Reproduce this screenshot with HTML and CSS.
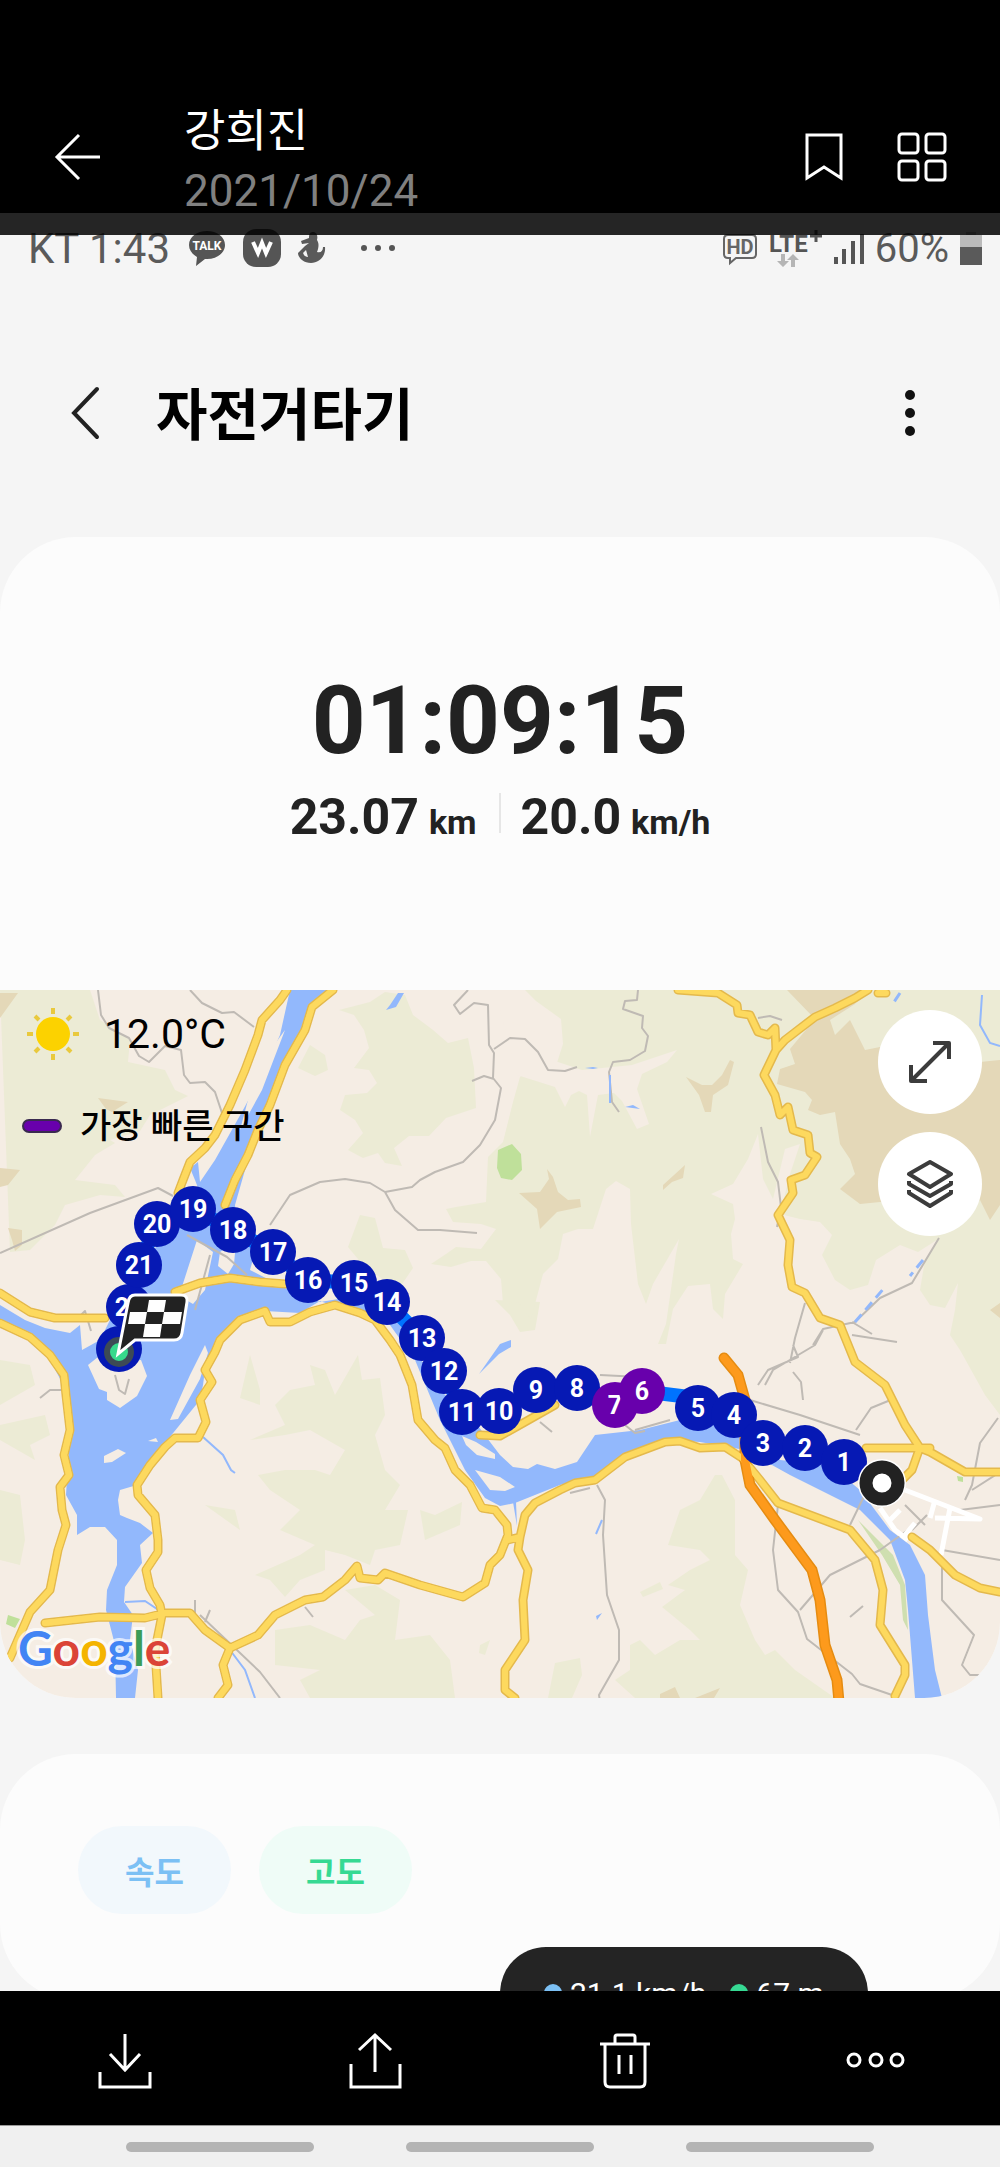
FILE: index.html
```html
<!DOCTYPE html>
<html lang="ko">
<head>
    <meta charset="UTF-8">
    <meta name="viewport" content="width=device-width, initial-scale=1.0">
    <title>자전거타기</title>
    <link rel="stylesheet" href="styles.css">
</head>
<body>
    <header class="viewer-header">
        <button class="icon-button" aria-label="뒤로">
            <svg width="48" height="48" viewBox="0 0 48 48"><path d="M25 2 3 24l22 22M3 24h43"/></svg>
        </button>
        <div class="viewer-title">
            <div class="name">강희진</div>
            <div class="date">2021/10/24</div>
        </div>
        <button class="icon-button" aria-label="북마크">
            <svg width="48" height="52" viewBox="0 0 48 52"><path d="M7 4h34v43L24 36 7 47z"/></svg>
        </button>
        <button class="icon-button" aria-label="모아보기">
            <svg width="52" height="52" viewBox="0 0 52 52">
                <rect x="3" y="3" width="19" height="19" rx="3"/><rect x="30" y="3" width="19" height="19" rx="3"/>
                <rect x="3" y="30" width="19" height="19" rx="3"/><rect x="30" y="30" width="19" height="19" rx="3"/>
            </svg>
        </button>
    </header>

    <main class="photo">
        <div class="status-bar">
            <span class="carrier">KT 1:43</span>
            <div class="status-icons">
                <svg width="38" height="40" viewBox="0 0 38 40">
                    <path d="M19 3c10 0 18 6 18 14s-8 14-18 14h-2l-9 7 1-9C4 26 1 22 1 17 1 9 9 3 19 3z" fill="#555"/>
                    <text x="19" y="22" class="talk">TALK</text>
                </svg>
                <svg width="40" height="40" viewBox="0 0 40 40">
                    <rect x="1" y="1" width="38" height="38" rx="13" fill="#555"/>
                    <path d="m11 14 5 11 4-10 4 10 5-11" fill="none" stroke="#fff" stroke-width="4"/>
                </svg>
                <svg width="28" height="40" viewBox="0 0 28 40">
                    <path d="M15 4c4 0 5 4 4 8 2 3 2 7 0 12 4 1 6-1 6-5h2c1 9-6 16-14 16C6 35 0 30 0 25l7-7 4-3-7 1-1-3 8-3c0-4 1-6 4-6z" fill="#5a5a5a"/>
                    <path d="m5 25 3-3 2 7c-2 0-4-1-5-4z" fill="#f5f5f5"/>
                </svg>
                <svg class="status-dots" width="36" height="8" viewBox="0 0 36 8" fill="#555">
                    <circle cx="4" cy="4" r="3"/><circle cx="18" cy="4" r="3"/><circle cx="32" cy="4" r="3"/>
                </svg>
            </div>
            <div class="status-right">
                <svg width="36" height="36" viewBox="0 0 36 36">
                    <path d="M6 5h24q4 0 4 4v15q0 4-4 4H14l-6 5v-5H6q-4 0-4-4V9q0-4 4-4z" fill="none" stroke="#666" stroke-width="2"/>
                    <text x="18" y="24" class="hd">HD</text>
                </svg>
                <svg width="54" height="40" viewBox="0 0 54 40">
                    <text x="0" y="24" class="lte">LTE</text>
                    <path d="M41 8h12M47 2v12" stroke="#555" stroke-width="3"/>
                    <path d="M12 26h4v7h4l-6 6-6-6h4zm10 13v-7h-4l6-6 6 6h-4v7z" fill="#b5b5b5"/>
                </svg>
                <svg width="30" height="36" viewBox="0 0 30 36">
                    <path d="M2 27v7M10 19v15M19 11v23M28 4v30" stroke="#555" stroke-width="4"/>
                </svg>
                <span>60%</span>
                <svg width="22" height="36" viewBox="0 0 22 36">
                    <path d="M6 2h10v3h6v12H0V5h6z" fill="#bbb"/><path d="M0 17h22v18H0z" fill="#5a5a5a"/>
                </svg>
            </div>
        </div>

        <div class="app-bar">
            <button aria-label="이전">
                <svg width="30" height="56" viewBox="0 0 30 56"><path d="M27 4 4 28l23 24" fill="none" stroke="#222" stroke-width="4" stroke-linecap="round"/></svg>
            </button>
            <h1>자전거타기</h1>
            <button aria-label="더보기">
                <svg width="12" height="48" viewBox="0 0 12 48" fill="#111"><circle cx="6" cy="6" r="5"/><circle cx="6" cy="24" r="5"/><circle cx="6" cy="42" r="5"/></svg>
            </button>
        </div>

        <section class="summary">
            <div class="summary-text">
                <div class="time">01:09:15</div>
                <div class="stats">
                    <div>23.07<small>km</small></div>
                    <div class="speed">20.0<small>km/h</small></div>
                </div>
            </div>

            <div class="map">
                <svg class="map-canvas" viewBox="0 0 1000 708">
                    <rect width="1000" height="708" fill="#f5ede4"/>
                    <!-- forest -->
                    <g fill="#ecebd5">
                        <path d="M0 0h90l10 30 30 20-2 22 37 8 10 20 13 6-38 19-10 16-30 9 5 3-20 12-20 25 40 5 10 12-25-2-35 10-10 20-25 25-20 2z"/>
                        <path d="m370 12 15-10 20 3 8 20 20 15 15 13 20-5 6 30 2 40-30 10-17 18h-20l-15 12 8 18-17-3-7-10-15 5-15-8 15-17-8-13-15-10 5-15 22-2 10-10-8-13-15-2 15-20-5-18-10-15-15-5zM310 55l15 10 3 15-13 6-17-8zM360 225l15 3 8 30 22 2 8 18-15 22-35-25-15-18zM495 310l45 2-5 28-15 2-10-17z"/>
                        <path d="M497 0h503v425l-15-20-25-45-10-15 5-25 3-27-13 25-15-3-10-15 5-30 15-22-22 14-18-7-24 15-8 25-18 5-15-10-13-25 10-20-12-13-20-3-20-5 10-40 10-30-15 5-12 50-10-20-5-45-10 25-15 25-22 10 22 10 2 15-4 15 2 25 10 5-18 30-2 25-10-10-3-25-22 2-15 23-7 35h-8l8-20 10-70 3-15-26 45-7 20-8-20-7-60-1-35-14-8-10 8-13 40h-15l-15 5-5 25-15 15-12 45-13-17-15 2-2-25-15-18h-15l-20 6-20-3 15-10 10-7 25 2 15-20-15-5-28-2-7-13 10-2 30-5 2-45 15-15 10-40 7-25 20-20 15 12 8-25-2-25-25-18-14-14z"/>
                        <path d="m250 450 35-15-10-20 15-15 25-5-5-20 15 5 10 25 23-40 4 25 18-2 5 37-10 20 10 35 15 15-15 25h23l-8 35-25 5-5 15-25-10-20-5v20l-25 10-15 17-15-17-15-5 45-20 15-10-35-15 20-20-30-20-12-15 27-5h30l15 5 15-25-35-20-25 5z"/>
                        <path d="m275 640 35-5 35 15 15-20 15-5-30-25 30-5 25 15-5 40 35-5 20 25 5 38H310l-10-18 20-10-45-5zM0 370l30 5 5 20-35 20zM0 435l45-10 5 20-20 10 5 15-35-20zM0 500l20 5 5 45-5 25-20-5zM240 408l10-43 10 35v15zM205 515l30 5 5 20zM420 520l15 5 27-13-2 23-35 15zM480 655l10-5-5 15-6-2z"/>
                        <path d="M715 485h7l13 25v55l13 15-8 35 15 35 10 15 10-5 20 20 40 28H635l-20-18 15-10v-25l10-5 15 15 25-15h20l-10-10-28-23 23-17-17-5 22-15 20-10-10-10-32-5 12-35 20-10zM548 708l7-35 25-5 2 17-10 23zM640 602l20-10 3 7-20 8z"/>
                    </g>
                    <path fill="#f5ede4" d="m500 20 12 12 28 12v22l42 14 50-5 45-15-10 12-25 12-5 15 12 35-12 5-15-28-8-8-16 2-8 42-3-42-8-4-8 4-6 12-10-20-38-12z"/>
                    <!-- high ground -->
                    <g fill="#e4d8b8">
                        <path d="M787 0h78l-10 14-25 16 5 15 15-15 15 30 25-5 60 20 50-5v145l-10 15-10-20-10 10-90-8-20 2-20-15 15-15-5-15-10-15-5-32-15 3-12-5 4-10-7-8-28-8 3-15 15-5-5-15 25-30z"/>
                        <path d="m686 87 16 8h10l10-10 8-15 4 2-6 23-15 10-2 17h-6l-6-17zM519 203l21-1 9-13-2-10 6 8 5 15 10 8 12-1 1 8-24 5-17 17-3-20zM663 195l22-20-2 13-11 4-9 8zM98 108l30 4-16 10-6-3zM0 178l20 2-12 15-8 2zM8 238l14 2v15l-7 6-3-11zM0 3h18L0 28zM660 704l15-7 5 11h-20zM695 708l25-10-6 10zM990 320l10-7v15z"/>
                    </g>
                    <path fill="#bfe09a" d="m498 160 14-6 9 10 1 16-10 10-11-2-4-10zM8 625l12 4-5 9-9-4zM957 486l6 1v5l-5-1z"/>
                    <path fill="#cfdfb0" d="m858 530 35 35 12 30 3 45-5-10-3-35-18-30z"/>
                    <!-- rivers -->
                    <g fill="#92b8fc">
                        <path d="M290 0H330L310 20 300 45 285 75 265 125 245 180 235 215 238 245 255 262 250 280 285 298 320 312 345 308 390 318 410 350 430 385 445 405 470 425 487 448 500 465 513 477 528 479 537 474 555 479 577 472 595 445 640 440 680 430 740 438 780 470 830 475 860 500 890 540 910 555 925 585 928 625 935 680 942 708H915L908 620 905 590 890 550 860 520 830 505 790 485 745 460 700 452 670 450 640 460 600 485 560 495 515 513 500 516 485 508 465 480 440 430 415 370 390 335 345 320 320 311 300 323 265 321 240 332 220 350 213 362 205 380 203 395 200 410 165 453 150 475 137 495 120 500 118 510 120 525 127 528 140 533 153 543 140 555 142 573 125 597 124 612 133 625 130 650 138 680 135 708H116L115 655 106 620 107 600 117 575V550L105 537H90L77 545V525L66 505 70 440 66 400 50 370 30 347 0 333V315L25 330 45 338 70 343 80 335 82 360 100 350 115 320 140 290 150 262 165 250 188 215 200 203 195 190 190 178 198 172 200 192 215 170 243 120 262 85 280 45Z"/>
                        <path d="M390 15l8-12h6l-8 14-10 3zM585 78l8-1 5 1-5 1zM625 117l8-2 7 4zM479 384l21-30 11-4v7l-12 7zM596 626l6-3-5 7zM513 512h3l1 24z"/>
                    </g>
                    <!-- islands and sandbanks -->
                    <path fill="#f5ede4" d="m88 375 10-8 15 7 28-4 6 16-10 20-17 12-13-8v-8l-8-3zM104 466l14-7 8 4-14 9-8 1zM148 451l8-3 2 4zM197 250l16 12-8 38-12 14-14-8zM220 262l16-10-2 22-6 10-10-8zM205 355l3 8-8 26-22 40-8 1 20-45zM192 440l9-30-8 14zM462 446l14 6 19 12v5l-18-4-11-10zM475 480l25 7 15 10-10 4-15-1zM285 40l-23 60-22 40 16-60z"/>
                    <!-- minor roads -->
                    <g fill="none" stroke="#bfbab4" stroke-width="2" stroke-linejoin="round">
                        <path d="M98 0l3 25 8 13 20 10 10 18 10 6 16-16 16 4 3 25 6 8 15-1 10 10 10 30M190 0l12 13 20 10 12-1 20 15M0 263l90-40 68-25 15 8M468 0l-14 15 6 9 14-11 14 2 1 40 5 8-1 25 8 10-6 32-15 25-17 17-28 10-15 8-8 7-27 5-15-9-25-4-25 3-30 13-20 30M385 202l10 18 23 20h22l37 3M494 59l16-11 15 1 13 13 10 18 17 1 12-4M472 91l12-5 10 3M638 0l-1 10-12 1-2 8 20 7-1 12 6 8-3 15-15 9-17 2-4 10 3 30 7 10M761 137l7 35 10 20 3 25-4 20M758 28l12-2 12 4M939 248l-9 15-18 30-32 15-25 24-32 7-10 16M805 313l-10 35-5 25M852 332l20 12M852 345l45 7M823 340l-8 15-42 25-8 15M793 355l5 12-30 13-10 15M793 382l8 10 2 18"/>
                        <path d="M40 408l10-8h15M115 385l4 15 6 4 4-15M80 326l5-5 6 20M187 245l40 22 20 18M210 265l-15 55M305 617l8 10M195 610v15M200 625l60 57 20 26M205 632l5-12M597 495l8 15-2 35 4 60 12 35v30l-20 35 4 28M570 503l20-5M778 515l-5 45 5 40 20 22 9 27 45 35 8 10 35 12M800 620l30-35 50-25M868 498l-18 37M856 440l15-22 22-9M942 560l58 10M942 570v40l32 35-12 30 8 10h18M850 627l13-11M1000 515l-40 5M965 510l7-15 8-42 18-25M972 500l28-18M905 515l20 20M912 540l15-15M880 560l28-20M540 432l12 10M600 385l40 2M625 435l10 8 10-2M635 440l35-10M750 410l50 15 60 20"/>
                    </g>
                    <path fill="none" stroke="#92b8fc" stroke-width="2" d="M203 447l20 18 8 15 4 3M125 612l20-1 18 12M230 660l15 20 10 28M602 530l-6 14M982 5l-2 30 10 18 10 3M610 85v28"/>
                    <path fill="none" stroke="#92b8fc" stroke-width="3" stroke-dasharray="10 6" d="M855 332l30-35M923 270l-13 16M900 3l-8 12"/>
                    <!-- town streets -->
                    <path fill="none" stroke="#fff" stroke-width="5" stroke-linejoin="round" d="m905 500 75 29-45-1M950 518l-9 47M880 518l15 22 13 10M888 532l12-12M905 545l10-12M935 510l-5 18"/>
                    <!-- main roads: casing first, then fill -->
                    <g fill="none" stroke="#e4b94c" stroke-width="9" stroke-linejoin="round" stroke-linecap="round">
                        <path id="roads-west" d="M287 0l-7 10-18 20-4 15-13 35-15 35-15 30-10 13-15 14-7 18-5 13M333 0l-21 17-7 23-20 35-15 40-12 25-10 25-13 25-10 25M0 303l30 19 25 6h50M175 302l25-9 30-5 30 4 25 2M0 333l30 14 20 18 14 20 2 20 4 35-6 25 5 20-9 12 2 23 4 15-8 25-8 40-20 22-20 46M265 321l5 11h20l20-10 25-7 25 8 15 7 15 20 10 15 12 30 6 35 17 20 10 8 10 22 15 15 12 23 13 2 12 15 1 10-8 20-10 10-5 18-22 14-43-12-35-12-7 7-18-2-3-12-12 14-22 17-18 3-30 15-17 20-28 13-7 17 5 20-10 13M265 321l-25 9-20 20-5 12-10 18 7 12-12 18 6 22-8 16h-23l-10 9-15 18-13 20 1 10 17 20 3 25v12l-12 18 4 18 10 17 2 10-7 35 3 48M45 633l55-6 45 1 20-5h25l15 17 25 18"/>
                        <path id="roads-east" d="M520 547l-2 13 10 20-5 30 2 40-20 30v20l10 8M508 550l12-3 5-22 10-12 25-13 15-7 20-3 30-23 40-15 15-1 20 7 25-1 17 11 18 22 18 23 72 27 25 30 8 30-3 35 25 40v10l-10 21M678 0l40 3 19 12 1 8 12 2 8 17 10 3 7-7 1 22-12 25 11 20 5 20 8-8 5 23 15 5 2 18 7 4-12 18-14 5 2 13-15 22 12 25-2 25 4 22 13 6 15 25 20 7 15 37 30 23 20 40 15 23 10 4 35 20h35M866 458h64M919 460l-7 20-12 12M776 60l9-10 13-10 17-13 20-9 20-10 13-8M912 547l18 13 25 25 25 13 20 4M480 445l20 1 25-14 30-17M878 3h8"/>
                    </g>
                    <g fill="none" stroke-linecap="round">
                        <path d="M724 368l14 17 7 25v60l5 25 25 35 37 50 8 30 5 45 12 35 2 22" stroke="#e58c12" stroke-width="11"/>
                    </g>
                    <g class="road-fill">
                        <use href="#road-fill-west"/>
                        <path id="road-fill-west" d="M287 0l-7 10-18 20-4 15-13 35-15 35-15 30-10 13-15 14-7 18-5 13M333 0l-21 17-7 23-20 35-15 40-12 25-10 25-13 25-10 25M0 303l30 19 25 6h50M175 302l25-9 30-5 30 4 25 2M0 333l30 14 20 18 14 20 2 20 4 35-6 25 5 20-9 12 2 23 4 15-8 25-8 40-20 22-20 46M265 321l5 11h20l20-10 25-7 25 8 15 7 15 20 10 15 12 30 6 35 17 20 10 8 10 22 15 15 12 23 13 2 12 15 1 10-8 20-10 10-5 18-22 14-43-12-35-12-7 7-18-2-3-12-12 14-22 17-18 3-30 15-17 20-28 13-7 17 5 20-10 13M265 321l-25 9-20 20-5 12-10 18 7 12-12 18 6 22-8 16h-23l-10 9-15 18-13 20 1 10 17 20 3 25v12l-12 18 4 18 10 17 2 10-7 35 3 48M45 633l55-6 45 1 20-5h25l15 17 25 18"/>
                        <use href="#roads-east"/>
                    </g>
                    <path d="M724 368l14 17 7 25v60l5 25 25 35 37 50 8 30 5 45 12 35 2 22" class="highway"/>
                    <!-- route -->
                    <polyline class="route" points="882,493 845,472 805,458 763,453 734,425 698,408 665,404 642,401 615,415 577,398 536,400 499,421 462,422 444,381 422,348 387,312 354,293 308,290 273,262 233,240 193,219 157,234 139,275 129,317 119,359"/>
                    <g class="pins">
                        <circle cx="119" cy="359" r="23"/>
                        <circle cx="129" cy="317" r="23"/><text x="129" y="326">22</text>
                        <circle cx="139" cy="275" r="23"/><text x="139" y="284">21</text>
                        <circle cx="157" cy="234" r="23"/><text x="157" y="243">20</text>
                        <circle cx="193" cy="219" r="23"/><text x="193" y="228">19</text>
                        <circle cx="233" cy="240" r="23"/><text x="233" y="249">18</text>
                        <circle cx="273" cy="262" r="23"/><text x="273" y="271">17</text>
                        <circle cx="308" cy="290" r="23"/><text x="308" y="299">16</text>
                        <circle cx="354" cy="293" r="23"/><text x="354" y="302">15</text>
                        <circle cx="387" cy="312" r="23"/><text x="387" y="321">14</text>
                        <circle cx="422" cy="348" r="23"/><text x="422" y="357">13</text>
                        <circle cx="444" cy="381" r="23"/><text x="444" y="390">12</text>
                        <circle cx="462" cy="422" r="23"/><text x="462" y="431">11</text>
                        <circle cx="499" cy="421" r="23"/><text x="499" y="430">10</text>
                        <circle cx="536" cy="400" r="23"/><text x="536" y="409">9</text>
                        <circle cx="577" cy="398" r="23"/><text x="577" y="407">8</text>
                        <circle cx="615" cy="415" r="23" class="fast"/><text x="615" y="424">7</text>
                        <circle cx="642" cy="401" r="23" class="fast"/><text x="642" y="410">6</text>
                        <circle cx="698" cy="418" r="23"/><text x="698" y="427">5</text>
                        <circle cx="734" cy="425" r="23"/><text x="734" y="434">4</text>
                        <circle cx="763" cy="453" r="23"/><text x="763" y="462">3</text>
                        <circle cx="805" cy="458" r="23"/><text x="805" y="467">2</text>
                        <circle cx="844" cy="472" r="23"/><text x="844" y="481">1</text>
                    </g>
                    <!-- start -->
                    <circle cx="882" cy="493" r="24" fill="#fff"/>
                    <circle cx="882" cy="493" r="16" fill="#fff" stroke="#222" stroke-width="13"/>
                    <!-- finish -->
                    <circle cx="119" cy="362" r="12" fill="#36d98c" stroke="#3d4a55" stroke-width="6"/>
                    <path d="M135 305h46q7 0 6 7l-5 31q-1 7-8 7h-39l-17 14 10-51q1-8 7-8z" fill="#222" stroke="#fff" stroke-width="3"/>
                    <path d="M149 310h17l-2 12h-17zM130 322h17l-2 12h-17zM164 322h18l-2 12h-18zM145 334h17l-2 13h-17z" fill="#fff"/>
                    <text class="google" x="18" y="676"><tspan fill="#4285f4">G</tspan><tspan fill="#db4437">o</tspan><tspan fill="#f4b400">o</tspan><tspan fill="#4285f4">g</tspan><tspan fill="#3c9d58">l</tspan><tspan fill="#db4437">e</tspan></text>
                </svg>

                <div class="map-info">
                    <div class="weather">
                        <svg width="54" height="54" viewBox="0 0 54 54">
                            <circle cx="27" cy="27" r="17" fill="#fcd200"/>
                            <path d="M27 1v6M27 47v6M1 27h6M47 27h6M9 9l4 4M41 41l4 4M9 45l4-4M41 13l4-4" stroke="#e9c93d" stroke-width="4"/>
                        </svg>
                        <span>12.0°C</span>
                    </div>
                    <div class="legend"><i></i>가장 빠른 구간</div>
                </div>
                <div class="map-buttons">
                    <button aria-label="지도 확대">
                        <svg width="48" height="48" viewBox="0 0 48 48"><path d="M27 5h16v16M43 5 5 43M5 27v16h16"/></svg>
                    </button>
                    <button aria-label="지도 유형">
                        <svg width="48" height="48" viewBox="0 0 48 48"><path d="M24 2 45 14 24 27 3 14zM3 21v3l21 12 21-12v-3M3 30v3l21 13 21-13v-3"/></svg>
                    </button>
                </div>
            </div>
        </section>

        <section class="chart">
            <button class="chip chip-speed">속도</button>
            <button class="chip chip-altitude">고도</button>
            <div class="tooltip">
                <span class="tip-speed">21.1 km/h</span>
                <span class="tip-altitude">67 m</span>
            </div>
        </section>
    </main>

    <footer class="toolbar">
        <button class="icon-button" aria-label="저장">
            <svg width="64" height="64" viewBox="0 0 64 64"><path d="M32 8v36M17 28l15 16 15-16M7 46v15h50V46"/></svg>
        </button>
        <button class="icon-button" aria-label="공유">
            <svg width="64" height="64" viewBox="0 0 64 64"><path d="M32 46V9M16 24 32 9l16 15M8 38v23h49V38"/></svg>
        </button>
        <button class="icon-button" aria-label="삭제">
            <svg width="64" height="64" viewBox="0 0 64 64"><path d="M7 18h50M22 18v-7q0-2 2-2h16q2 0 2 2v7M12 18v38q0 5 5 5h30q5 0 5-5V18M26 29v19M38 29v19"/></svg>
        </button>
        <button class="icon-button" aria-label="더보기">
            <svg width="64" height="64" viewBox="0 0 64 64"><circle cx="11" cy="34" r="6"/><circle cx="33" cy="34" r="6"/><circle cx="54" cy="34" r="6"/></svg>
        </button>
    </footer>
    <div class="gesture-bar"><i></i><i></i><i></i></div>
</body>
</html>
```

FILE: styles.css
```css
* {
    box-sizing: border-box;
}

body {
    font-family: Roboto, "Noto Sans CJK KR", sans-serif;
    margin: 0;
    height: 100vh;
    display: flex;
    flex-direction: column;
    background-color: #f5f5f5;
    overflow: hidden;
}

button {
    font-family: inherit;
    padding: 0;
    border: none;
    background: none;
    cursor: pointer;
}

svg {
    display: block;
}

.icon-button svg {
    fill: none;
    stroke: white;
    stroke-width: 3;
}

/* photo viewer header */
.viewer-header {
    position: relative;
    z-index: 1;
    display: flex;
    align-items: center;
    flex-shrink: 0;
    gap: 48px;
    padding: 101px 52px 0 54px;
    background-color: black;
    color: white;
}

/* see-through strip that hangs over the photo */
.viewer-header::after {
    content: "";
    position: absolute;
    top: 100%;
    left: 0;
    right: 0;
    height: 22px;
    background-color: rgba(0, 0, 0, 0.85);
}

.viewer-title {
    flex: 1;
    margin-left: 34px;
}

.name {
    font-size: 45px;
    line-height: 62px;
}

.date {
    margin-top: 6px;
    font-size: 44px;
    line-height: 44px;
    color: #808080;
}

.photo {
    flex: 1;
    min-height: 0;
    overflow: hidden;
}

.status-bar {
    display: flex;
    align-items: center;
    height: 70px;
    padding: 0 18px 0 28px;
    font-size: 40px;
    color: #5a5a5a;
}

.carrier {
    font-size: 42px;
}

.status-icons {
    display: flex;
    align-items: center;
    gap: 16px;
    margin-left: 18px;
}

.status-dots {
    margin-left: 18px;
}

.status-right {
    display: flex;
    align-items: center;
    gap: 11px;
    margin-left: auto;
}

.talk {
    font-size: 12px;
    font-weight: bold;
    fill: white;
    text-anchor: middle;
}

.hd {
    font-size: 20px;
    font-weight: bold;
    fill: #666;
    text-anchor: middle;
}

.lte {
    font-size: 24px;
    font-weight: bold;
    fill: #555;
}

.app-bar {
    display: flex;
    align-items: center;
    height: 254px;
    padding: 0 84px 0 70px;
}

.app-bar button {
    padding-top: 6px;
}

.app-bar h1 {
    flex: 1;
    margin: 0 0 0 56px;
    font-size: 56px;
    font-weight: bold;
    color: black;
}

.summary {
    border-radius: 76px;
    background-color: #fcfcfc;
    overflow: hidden;
}

.summary-text {
    padding: 128px 0 141px;
    text-align: center;
    font-weight: bold;
    color: #222;
}

.time {
    font-size: 94px;
    line-height: 112px;
}

.stats {
    display: flex;
    justify-content: center;
    margin-top: 8px;
    font-size: 50px;
    line-height: 64px;
}

.stats > div {
    height: 64px;
}

.stats small {
    margin-left: 10px;
    font-size: 34px;
}

.speed {
    margin-left: 22px;
    padding-left: 22px;
    background: linear-gradient(#e6e6e6, #e6e6e6) no-repeat left 8px / 2px 40px;
}

/* map */
.map {
    position: relative;
}

.map-canvas {
    width: 100%;
    height: auto;
}

.road-fill {
    fill: none;
    stroke: #fdd95e;
    stroke-width: 6;
    stroke-linecap: round;
    stroke-linejoin: round;
}

.highway {
    fill: none;
    stroke: #fd9a1c;
    stroke-width: 8;
    stroke-linecap: round;
}

.route {
    fill: none;
    stroke: #0073ff;
    stroke-width: 14;
}

.pins {
    fill: #0619b4;
    font-size: 25px;
    font-weight: bold;
    text-anchor: middle;
}

.pins text {
    fill: white;
}

.pins .fast {
    fill: #6800ac;
}

.google {
    font-family: Lato, sans-serif;
    font-size: 48px;
    font-weight: bold;
    stroke: rgba(255, 255, 255, 0.7);
    stroke-width: 6;
    paint-order: stroke;
}

.map-info {
    position: absolute;
    top: 16px;
    left: 22px;
    color: black;
}

.weather {
    display: flex;
    align-items: center;
    gap: 24px;
    margin-left: 4px;
    height: 56px;
    font-size: 41px;
}

.legend {
    display: flex;
    align-items: center;
    gap: 18px;
    margin-top: 40px;
    font-size: 34px;
    line-height: 48px;
    font-weight: 500;
}

.legend i {
    width: 40px;
    height: 14px;
    border: 2px solid #3a2a50;
    border-radius: 7px;
    background-color: #6800ac;
}

.map-buttons {
    position: absolute;
    top: 20px;
    right: 18px;
    display: flex;
    flex-direction: column;
    gap: 18px;
}

.map-buttons button {
    display: flex;
    align-items: center;
    justify-content: center;
    width: 104px;
    height: 104px;
    border-radius: 50%;
    background-color: white;
}

.map-buttons svg {
    fill: none;
    stroke: #3c3c3c;
    stroke-width: 4;
    stroke-linejoin: round;
}

/* speed and altitude chart */
.chart {
    position: relative;
    display: flex;
    gap: 28px;
    height: 246px;
    margin-top: 56px;
    padding: 72px 78px;
    border-radius: 76px;
    background-color: #fcfcfc;
}

.chip {
    width: 153px;
    height: 88px;
    border-radius: 44px;
    font-size: 32px;
    font-weight: bold;
}

.chip-speed {
    background-color: #f2f8fc;
    color: #7cc0f4;
}

.chip-altitude {
    background-color: #effcf7;
    color: #36d993;
}

.tooltip {
    position: absolute;
    top: 193px;
    left: 50%;
    display: flex;
    align-items: center;
    gap: 24px;
    height: 92px;
    padding: 0 44px;
    border-radius: 46px;
    background-color: #242424;
    color: white;
    font-size: 30px;
    white-space: nowrap;
}

.tooltip span {
    display: flex;
    align-items: center;
    gap: 8px;
}

.tooltip span::before {
    content: "";
    width: 18px;
    height: 18px;
    border-radius: 50%;
    background-color: #7cc0f4;
}

.tooltip .tip-altitude::before {
    background-color: #36d993;
}

/* bottom */
.toolbar {
    display: grid;
    grid-template-columns: repeat(4, 1fr);
    flex-shrink: 0;
    height: 135px;
    border-bottom: 1px solid #999;
    background-color: black;
}

.toolbar .icon-button {
    display: flex;
    align-items: center;
    justify-content: center;
}

.gesture-bar {
    display: flex;
    align-items: center;
    justify-content: center;
    flex-shrink: 0;
    gap: 92px;
    height: 41px;
    background-color: #f0f0f0;
}

.gesture-bar i {
    width: 188px;
    height: 10px;
    border-radius: 5px;
    background-color: #b4b4b4;
}
```
